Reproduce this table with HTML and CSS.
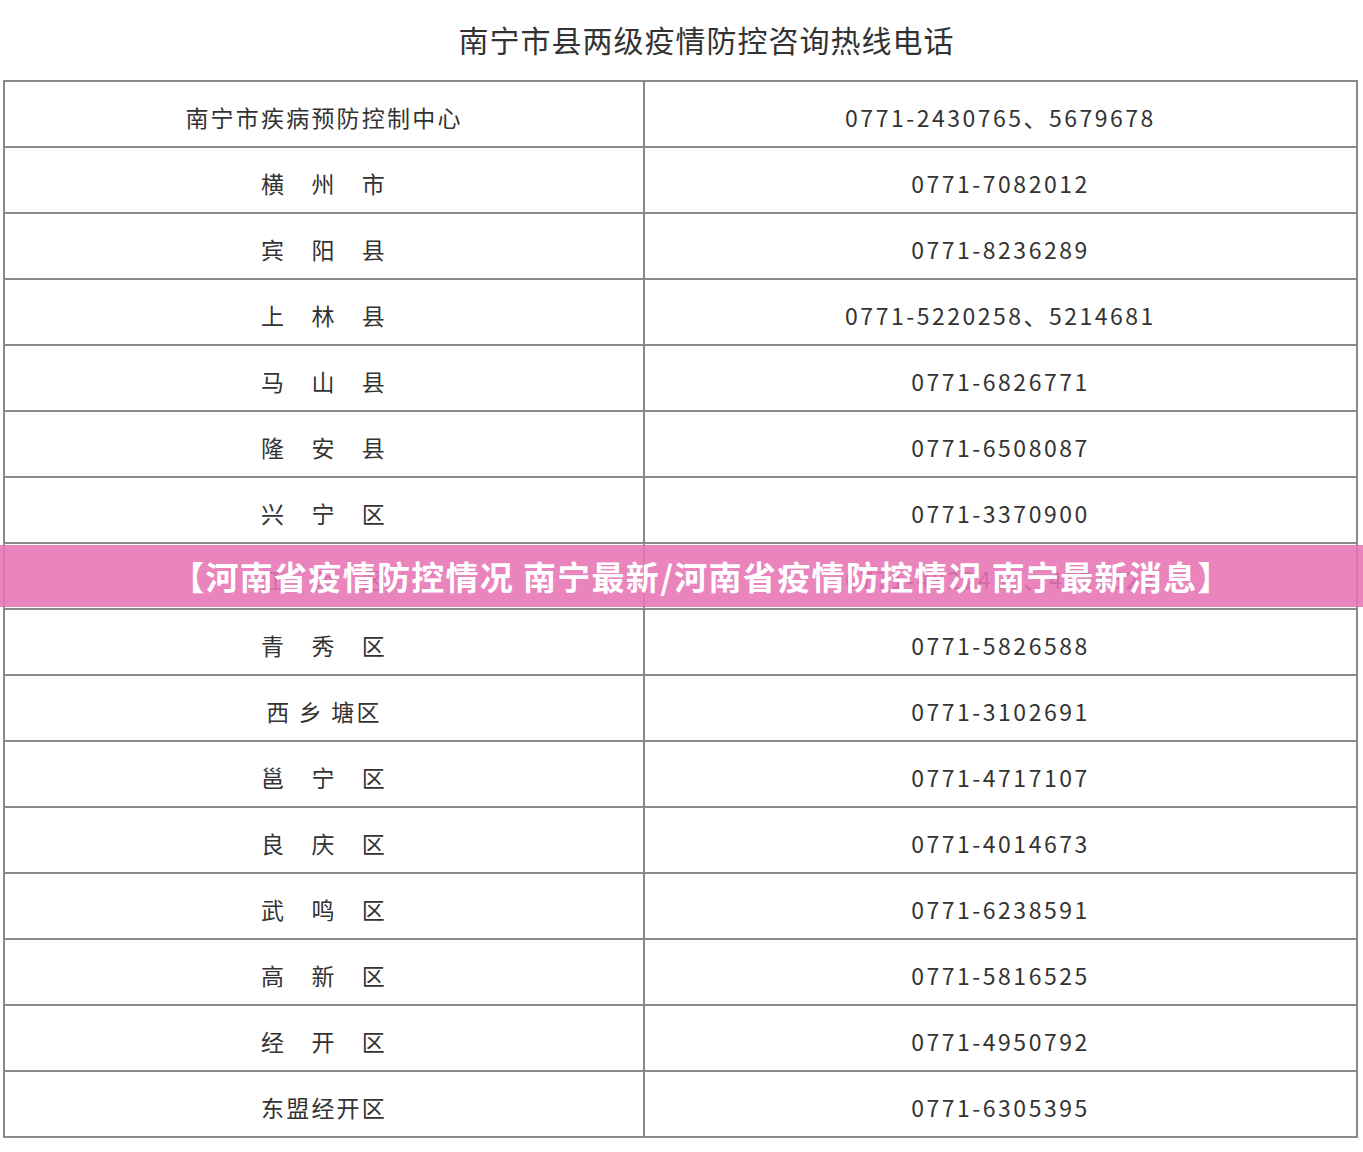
FILE: index.html
```html
<!DOCTYPE html>
<html lang="zh-CN">
<head>
<meta charset="utf-8">
<title>南宁市县两级疫情防控咨询热线电话</title>
<link rel="stylesheet" href="styles.css">
</head>
<body>
<div class="page">
  <h1 class="title">南宁市县两级疫情防控咨询热线电话</h1>
  <table class="hotline">
    <colgroup><col class="c-name"><col class="c-phone"></colgroup>
    <tbody>
      <tr><td class="name">南宁市疾病预防控制中心</td><td class="phone">0771-2430765、5679678</td></tr>
      <tr><td class="name">横　州　市</td><td class="phone">0771-7082012</td></tr>
      <tr><td class="name">宾　阳　县</td><td class="phone">0771-8236289</td></tr>
      <tr><td class="name">上　林　县</td><td class="phone">0771-5220258、5214681</td></tr>
      <tr><td class="name">马　山　县</td><td class="phone">0771-6826771</td></tr>
      <tr><td class="name">隆　安　县</td><td class="phone">0771-6508087</td></tr>
      <tr><td class="name">兴　宁　区</td><td class="phone">0771-3370900</td></tr>
      <tr><td class="name">江　南　区</td><td class="phone">0771-4822409、4821529</td></tr>
      <tr><td class="name">青　秀　区</td><td class="phone">0771-5826588</td></tr>
      <tr><td class="name">西 乡 塘区</td><td class="phone">0771-3102691</td></tr>
      <tr><td class="name">邕　宁　区</td><td class="phone">0771-4717107</td></tr>
      <tr><td class="name">良　庆　区</td><td class="phone">0771-4014673</td></tr>
      <tr><td class="name">武　鸣　区</td><td class="phone">0771-6238591</td></tr>
      <tr><td class="name">高　新　区</td><td class="phone">0771-5816525</td></tr>
      <tr><td class="name">经　开　区</td><td class="phone">0771-4950792</td></tr>
      <tr><td class="name">东盟经开区</td><td class="phone">0771-6305395</td></tr>
    </tbody>
  </table>
  <div class="banner">【河南省疫情防控情况 南宁最新/河南省疫情防控情况 南宁最新消息】</div>
</div>
</body>
</html>
```

FILE: styles.css
```css
html, body {
  margin: 0;
  padding: 0;
  background: #ffffff;
}

body {
  font-family: "Noto Sans CJK SC", "Noto Sans", sans-serif;
  color: #333333;
}

.page {
  position: relative;
  width: 1363px;
  min-height: 1152px;
}

.title {
  margin: 0;
  height: 80px;
  line-height: 78px;
  padding-left: 50px;
  text-align: center;
  font-size: 30px;
  font-weight: normal;
  letter-spacing: 1px;
  color: #333333;
}

.hotline {
  margin-left: 3px;
  width: 1353px;
  border-collapse: collapse;
  table-layout: fixed;
  border: 2px solid #8a8a8a;
}

.c-name { width: 640px; }
.c-phone { width: 713px; }

.hotline td {
  border: 2px solid #8a8a8a;
  height: 66px;
  padding: 5px 0 0 0;
  text-align: center;
  vertical-align: middle;
  font-size: 23px;
  line-height: 30px;
  color: #333333;
  box-sizing: border-box;
}

.hotline td.name {
  letter-spacing: 2.2px;
  white-space: pre;
}

.hotline td.phone {
  letter-spacing: 2.5px;
}

.banner {
  position: absolute;
  left: 0;
  top: 545px;
  width: 1363px;
  height: 62px;
  background: rgba(230, 115, 180, 0.88);
  color: #ffffff;
  font-size: 33px;
  font-weight: bold;
  line-height: 62px;
  text-align: center;
  padding-left: 40px;
  box-sizing: border-box;
  letter-spacing: 1.3px;
}
```
